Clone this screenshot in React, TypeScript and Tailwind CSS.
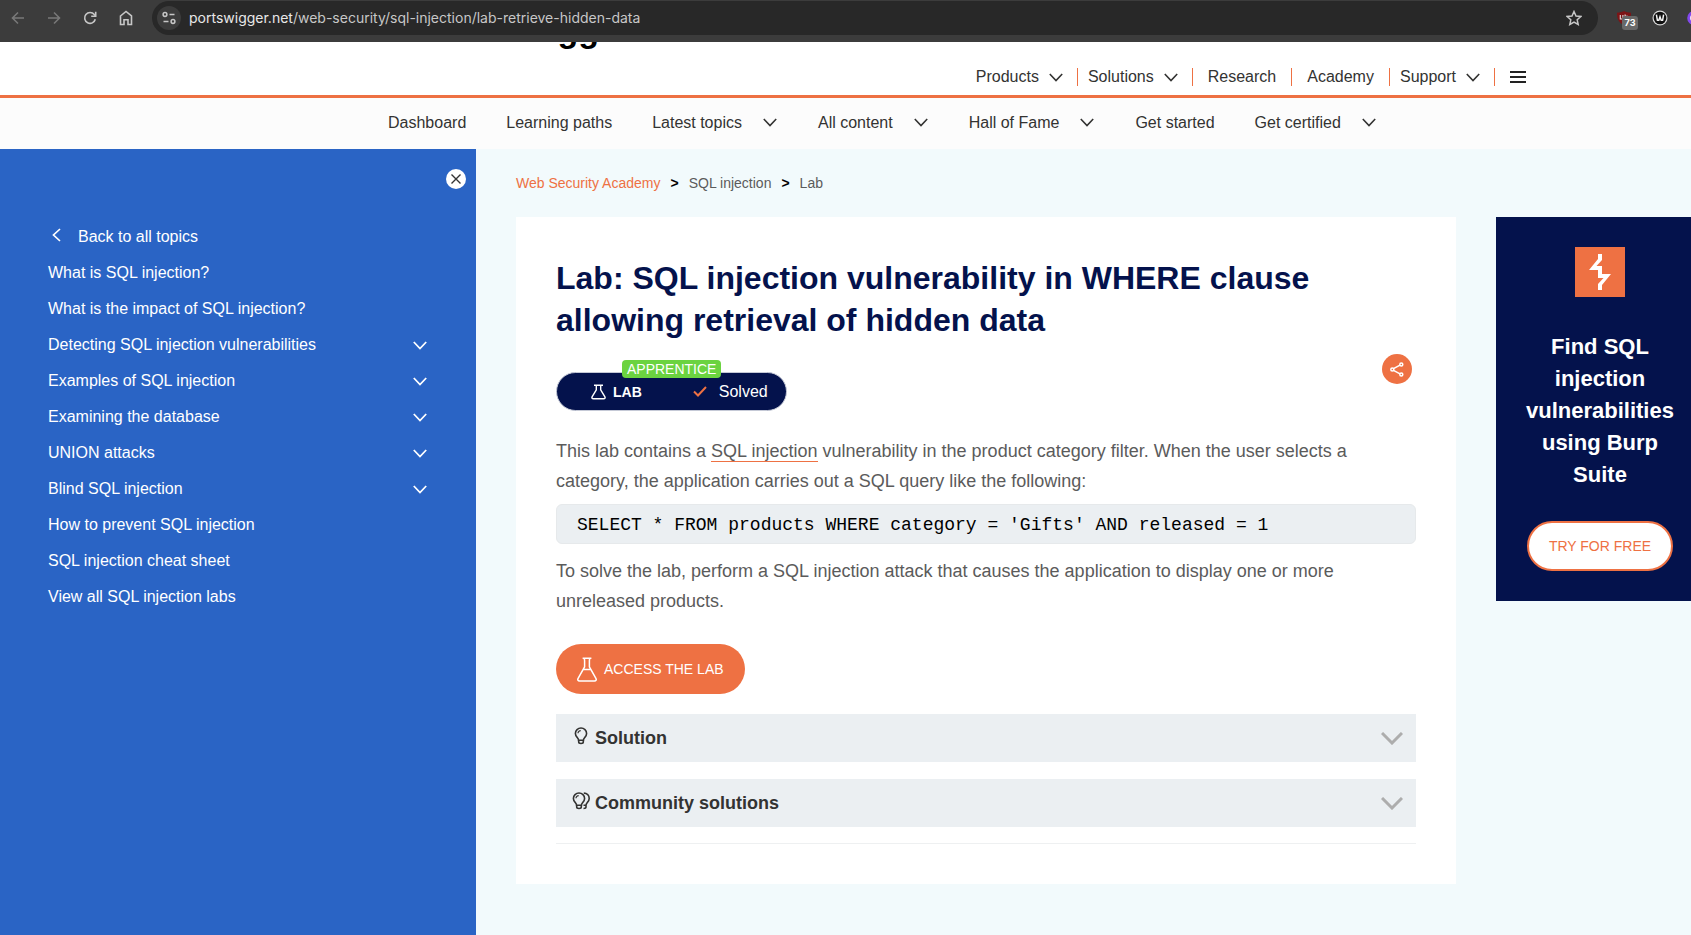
import type { ReactNode } from "react";

type ChevronProps = { className: string; strokeWidth?: number };

function Chevron({ className, strokeWidth = 1.6 }: ChevronProps) {
  return (
    <svg viewBox="0 0 14 9" className={className} fill="none" stroke="currentColor" strokeWidth={strokeWidth} aria-hidden="true">
      <path d="M.8 1L7 7.500 13.200 1" />
    </svg>
  );
}

function Flask({ className }: { className: string }) {
  return (
    <svg viewBox="0 0 20 25" className={className} fill="none" stroke="currentColor" strokeWidth="1.500" strokeLinejoin="round" aria-hidden="true">
      <path d="M5.6 1.2h8.8M7 1.2c.6.8.6 1.6.6 2.600v6L1.100 21.300c-.8 1.500-.2 2.700 1.400 2.700h15c1.600 0 2.200-1.200 1.400-2.700L12.400 9.800v-6c0-1 0-1.800.6-2.600M6.200 12.600h7.600" />
    </svg>
  );
}

function SmallFlask() {
  return (
    <svg viewBox="0 0 15 16" className="h-4 w-[15px]" fill="none" stroke="currentColor" strokeWidth="1.400" strokeLinejoin="round" aria-hidden="true">
      <path d="M3 1.200h9M5.300 1.200v4.600L1.200 12.600c-.7 1.300-.2 2.200 1.200 2.200h10.200c1.400 0 1.900-.9 1.200-2.200L9.700 5.800V1.200" />
    </svg>
  );
}

function Bulb() {
  return (
    <svg viewBox="0 0 18 18" className="h-[18px] w-[18px]" fill="none" stroke="currentColor" strokeWidth="1.600" aria-hidden="true">
      <path d="M6.600 13.200c0-2.200-3.200-3.400-3.200-6.800a5.600 5.400 0 0 1 11.200 0c0 3.400-3.200 4.600-3.200 6.800z" />
      <path d="M6.700 13.200v1.900c0 .9.700 1.400 2.300 1.400s2.300-.5 2.300-1.400v-1.900" />
      <path d="M6 6.300a2.700 2.700 0 0 1 2.700-2.700" strokeWidth="1.200" />
    </svg>
  );
}

function DoubleBulb() {
  return (
    <svg viewBox="0 0 18 18" className="h-[18px] w-[18px]" fill="none" stroke="currentColor" strokeWidth="1.600" aria-hidden="true">
      <path d="M4.600 13.200c0-2.200-3.200-3.400-3.200-6.800a5.600 5.400 0 0 1 11.200 0c0 3.400-3.200 4.600-3.200 6.800z" />
      <path d="M4.700 13.200v1.900c0 .9.700 1.400 2.300 1.400s2.300-.5 2.300-1.400v-1.900" />
      <path d="M4 6.300a2.700 2.700 0 0 1 2.700-2.700" strokeWidth="1.200" />
      <path d="M11.800 1.100c3.200 0 5.400 2.300 5.400 5.300 0 3.400-3.200 4.600-3.200 6.800h-2.500M14 13.200v1.900c0 .9-.9 1.400-2.500 1.400" />
    </svg>
  );
}

function BrowserBar() {
  return (
    <div className="flex h-[42px] items-start bg-[#3c3c3c] pl-1.5 text-[#c7c7c7]">
      <div className="flex h-9 items-center gap-3">
        <button aria-label="Back" className="flex h-6 w-6 items-center justify-center text-[#787878]">
          <svg viewBox="0 0 14 14" className="h-3.5 w-3.5" fill="none" stroke="currentColor" strokeWidth="1.600"><path d="M13 7H1.500M7 1.500L1.500 7 7 12.500" /></svg>
        </button>
        <button aria-label="Forward" className="flex h-6 w-6 items-center justify-center text-[#787878]">
          <svg viewBox="0 0 14 14" className="h-3.5 w-3.5" fill="none" stroke="currentColor" strokeWidth="1.600"><path d="M1 7h11.500M7 1.500L12.500 7 7 12.500" /></svg>
        </button>
        <button aria-label="Reload" className="flex h-6 w-6 items-center justify-center">
          <svg viewBox="0 0 14 14" className="h-3.5 w-3.5" fill="none" stroke="currentColor" strokeWidth="1.600"><path d="M12.300 8.300A5.400 5.400 0 1 1 11.300 3.600L12.600 5" /><path d="M12.700.8v4.500H8.200" /></svg>
        </button>
        <button aria-label="Home" className="flex h-6 w-6 items-center justify-center">
          <svg viewBox="0 0 14 16" className="h-4 w-3.5" fill="none" stroke="currentColor" strokeWidth="1.600"><path d="M1.500 6L7 1.500 12.500 6v8.500H9v-4.700H5v4.700H1.500z" /></svg>
        </button>
      </div>
      <div className="mt-px ml-3.5 flex h-[34px] flex-1 items-center rounded-full bg-[#282828] pr-4 pl-[5px]">
        <button aria-label="Site information" className="flex h-6 w-6 items-center justify-center rounded-full bg-[#3c3c3c]">
          <svg viewBox="0 0 14 14" className="h-3.5 w-3.5" fill="none" stroke="currentColor" strokeWidth="1.500">
            <circle cx="3" cy="3.500" r="1.900" /><path d="M7.500 3.500h5M1.500 10.500h5" /><circle cx="11" cy="10.500" r="1.900" />
          </svg>
        </button>
        <div aria-label="Address" className="ml-2 flex-1 font-['Inter',sans-serif] text-[14px] leading-5">
          <span className="text-[#e8e8e8]">portswigger.net</span>/web-security/sql-injection/lab-retrieve-hidden-data
        </div>
        <button aria-label="Bookmark">
          <svg viewBox="0 0 16 16" className="h-4 w-4" fill="none" stroke="currentColor" strokeWidth="1.500"><path d="M8 1.500l2 4.500 4.800.5-3.600 3.300 1 4.700L8 12.100l-4.200 2.400 1-4.700L1.200 6.500 6 6z" /></svg>
        </button>
      </div>
      <div className="flex h-9 items-center pl-[19px]">
        <button aria-label="Content blocker" className="relative h-5 w-[22px]">
          <svg viewBox="0 0 14 14" className="h-3.5 w-3.5"><path d="M7 0c2 1.200 4.300 1.600 7 1.700C14 8 12.500 11.500 7 14 1.500 11.500 0 8 0 1.700 2.700 1.600 5 1.200 7 0z" fill="#7d1416" /><path d="M3.300 4v4h2.600V4M8.100 3.500v4.600h2.300V5.400H8.300" fill="none" stroke="#e6e6e6" strokeWidth="1.100" /></svg>
          <span className="absolute top-2 left-[5px] flex h-3.5 w-4 items-center justify-center rounded-[3px] bg-[#696969] font-['Inter',sans-serif] text-[9px] font-bold text-white">73</span>
        </button>
        <button aria-label="Wappalyzer" className="ml-[13px]">
          <svg viewBox="0 0 16 16" className="h-4 w-4"><circle cx="8" cy="8" r="7.500" fill="#d8d8d8" /><circle cx="8" cy="8" r="6.300" fill="#101010" /><path d="M4.400 4.600l1 5.700h1.400L8 6.800l1.200 3.500h1.400l1-5.700" fill="none" stroke="#f4f4f4" strokeWidth="1.500" /></svg>
        </button>
        <svg viewBox="0 0 4 14" className="ml-[19px] h-3.5 w-1" aria-hidden="true"><circle cx="7.200" cy="7" r="7" fill="#8348ee" /><circle cx="7.200" cy="7" r="4.300" fill="#e9ddff" /></svg>
      </div>
    </div>
  );
}

function MenuLink({ label, menu }: { label: string; menu?: boolean }) {
  return (
    <a href="#" className={menu ? "flex h-[18px] items-center border-r border-[#ee7143] pr-[14px] pl-[10px]" : "flex h-[18px] items-center border-r border-[#ee7143] px-[15px]"}>
      {label}
      {menu && <Chevron className="ml-[10px] h-[9px] w-[14px]" />}
    </a>
  );
}

function Header() {
  return (
    <header className="flex h-14 items-start border-b-[3px] border-[#ee7143] bg-white pl-[431px] text-[#333332]">
      <a href="#" className="h-3 shrink-0 overflow-hidden">
        <span className="-mt-7 block text-[34px] leading-8 font-bold text-black">PortSwigger</span>
      </a>
      <nav aria-label="Main" className="mt-[26px] mr-[165px] ml-auto flex items-center">
        <MenuLink label="Products" menu />
        <MenuLink label="Solutions" menu />
        <MenuLink label="Research" />
        <MenuLink label="Academy" />
        <MenuLink label="Support" menu />
        <button aria-label="Menu" className="ml-[15px] flex w-4 flex-col gap-[3px]">
          <span className="h-0.5 bg-[#222]" />
          <span className="h-0.5 bg-[#222]" />
          <span className="h-0.5 bg-[#222]" />
        </button>
      </nav>
    </header>
  );
}

const subItems = [
  { label: "Dashboard" },
  { label: "Learning paths" },
  { label: "Latest topics", menu: true },
  { label: "All content", menu: true },
  { label: "Hall of Fame", menu: true },
  { label: "Get started" },
  { label: "Get certified", menu: true },
];

function SubNav() {
  return (
    <nav aria-label="Academy" className="flex h-[51px] items-center gap-10 bg-[#fcfcfc] pb-0.5 pl-[388px] text-[#333332]">
      {subItems.map((item) => (
        <a key={item.label} href="#" className="flex shrink-0 items-center gap-[21px]">
          {item.label}
          {item.menu && <Chevron className="mr-px h-[9px] w-[14px]" />}
        </a>
      ))}
    </nav>
  );
}

const topics = [
  { label: "What is SQL injection?" },
  { label: "What is the impact of SQL injection?" },
  { label: "Detecting SQL injection vulnerabilities", menu: true },
  { label: "Examples of SQL injection", menu: true },
  { label: "Examining the database", menu: true },
  { label: "UNION attacks", menu: true },
  { label: "Blind SQL injection", menu: true },
  { label: "How to prevent SQL injection" },
  { label: "SQL injection cheat sheet" },
  { label: "View all SQL injection labs" },
];

function Sidebar() {
  return (
    <aside className="flex w-[476px] shrink-0 flex-col bg-[#2a64c5] pt-5 text-white">
      <button aria-label="Close" className="mr-[10px] flex h-5 w-5 items-center justify-center self-end rounded-full bg-white text-[#333]">
        <svg viewBox="0 0 10 10" className="h-2.5 w-2.5" fill="none" stroke="currentColor" strokeWidth="1.400"><path d="M.5.5l9 9M9.500.5l-9 9" /></svg>
      </button>
      <ul className="mt-[30px] pr-[49px] pl-12">
        <li>
          <a href="#" className="flex h-9 items-center">
            <svg viewBox="0 0 9 14" className="mb-1 ml-1 h-[14px] w-[9px]" fill="none" stroke="currentColor" strokeWidth="1.700"><path d="M8 1L1.500 7 8 13" /></svg>
            <span className="ml-[17px]">Back to all topics</span>
          </a>
        </li>
        {topics.map((t) => (
          <li key={t.label}>
            <a href="#" className="flex h-9 items-center justify-between">
              {t.label}
              {t.menu && <Chevron className="h-[9px] w-[14px]" strokeWidth={1.8} />}
            </a>
          </li>
        ))}
      </ul>
    </aside>
  );
}

function Accordion({ icon, label }: { icon: ReactNode; label: string }) {
  return (
    <button className="flex h-12 w-full items-center bg-[#ebeff2] pr-[13px] pl-4 text-[18px] leading-6 font-bold text-[#333332]">
      <span className="mb-1">{icon}</span>
      <span className="ml-[5px]">{label}</span>
      <svg viewBox="0 0 22 13" className="ml-auto h-[13px] w-[22px] text-[#adadad]" fill="none" stroke="currentColor" strokeWidth="3"><path d="M1 1l10 10L21 1" /></svg>
    </button>
  );
}

function LabCard() {
  return (
    <article className="min-w-0 flex-1 bg-white px-10 pt-10 pb-10">
      <h1 className="text-[32px] leading-[42px] font-bold text-[#04124c]">
        Lab: SQL injection vulnerability in WHERE clause allowing retrieval of hidden data
      </h1>
      <div className="mt-[13px] flex items-start justify-between pr-1">
        <div className="relative mt-[18px] flex h-[39px] w-[231px] items-center rounded-full border border-[#c5c9d6] bg-[#04124c] pl-[34px] text-white">
          <SmallFlask />
          <span className="ml-[7px] text-[14px] leading-5 font-bold">LAB</span>
          <svg viewBox="0 0 14 11" className="ml-[51px] h-[11px] w-[14px]" fill="none" stroke="#ee7143" strokeWidth="2"><path d="M1 5.500l4 4L13 1" /></svg>
          <span className="ml-3 leading-5">Solved</span>
          <span className="absolute -top-[13px] left-[65px] flex h-[18px] items-center rounded bg-[#6bd340] px-[5px] text-[14px] leading-[18px]">APPRENTICE</span>
        </div>
        <button aria-label="Share" className="flex h-[30px] w-[30px] items-center justify-center rounded-full bg-[#ee7143]">
          <svg viewBox="0 0 14 15" className="h-[15px] w-[14px]" fill="none" stroke="white" strokeWidth="1.500">
            <path d="M3.500 6.700l6.500-3.600M3.500 8.300l6.500 3.600" /><circle cx="2.300" cy="7.500" r="1.500" /><circle cx="11.300" cy="2.500" r="1.500" /><circle cx="11.300" cy="12.500" r="1.500" />
          </svg>
        </button>
      </div>
      <div className="mt-[25px] text-[18px] leading-[30px] text-[#5b5b5b]">
        <p>
          This lab contains a{" "}
          <a href="#" className="border-b border-[#ee7143]">SQL injection</a>{" "}
          vulnerability in the product category filter. When the user selects a category, the application carries out a SQL query like the following:
        </p>
        <pre className="mt-2 mb-3 h-10 overflow-hidden rounded-md border border-[#e6e9eb] bg-[#ebeff2] px-5 font-['Liberation_Mono',monospace] leading-10 text-black">
          <code>SELECT * FROM products WHERE category = 'Gifts' AND released = 1</code>
        </pre>
        <p>To solve the lab, perform a SQL injection attack that causes the application to display one or more unreleased products.</p>
      </div>
      <button className="mt-7 flex h-[50px] items-center rounded-full bg-[#ee7143] px-[21px] text-[14px] text-white">
        <Flask className="h-[25px] w-5" />
        <span className="ml-[7px]">ACCESS THE LAB</span>
      </button>
      <div className="mt-5 flex flex-col gap-[17px] border-b border-[#eef0f1] pb-4">
        <Accordion icon={<Bulb />} label="Solution" />
        <Accordion icon={<DoubleBulb />} label="Community solutions" />
      </div>
    </article>
  );
}

function Promo() {
  return (
    <aside className="flex w-[208px] shrink-0 flex-col items-center bg-[#04124c] py-[30px] text-center text-white">
      <svg viewBox="0 0 50 50" className="h-[50px] w-[50px]" aria-hidden="true">
        <path fill="#ee7143" d="M0 0h50v50H0z" />
        <path fill="white" d="M23 7h4v6l-5.500 6H27v8h9L27 38v5h-4v-6l5.500-6H23v-8h-9L23 12z" />
      </svg>
      <h2 className="mt-[34px] px-7 text-[22px] leading-8 font-bold">Find SQL injection vulnerabilities using Burp Suite</h2>
      <a href="#" className="mt-[30px] flex h-[50px] items-center rounded-full border-2 border-[#ee7143] bg-white px-5 text-[14px] text-[#ee7143]">TRY FOR FREE</a>
    </aside>
  );
}

export default function App() {
  return (
    <div className="flex min-h-screen flex-col overflow-hidden bg-white font-['Liberation_Sans',Arial,sans-serif] text-base leading-6">
      <BrowserBar />
      <Header />
      <SubNav />
      <div className="flex flex-1 bg-[#f2fafc]">
        <Sidebar />
        <main className="-mr-[13px] min-w-0 flex-1 pt-6 pl-10">
          <nav aria-label="Breadcrumb" className="flex items-center text-[14px] leading-5 text-[#5b5b5b]">
            <a href="#" className="text-[#ee7143]">Web Security Academy</a>
            <span className="mx-[10px] font-bold text-black">&gt;</span>
            <a href="#">SQL injection</a>
            <span className="mx-[10px] font-bold text-black">&gt;</span>
            <span>Lab</span>
          </nav>
          <div className="mt-6 flex items-start gap-10">
            <LabCard />
            <Promo />
          </div>
        </main>
      </div>
    </div>
  );
}
